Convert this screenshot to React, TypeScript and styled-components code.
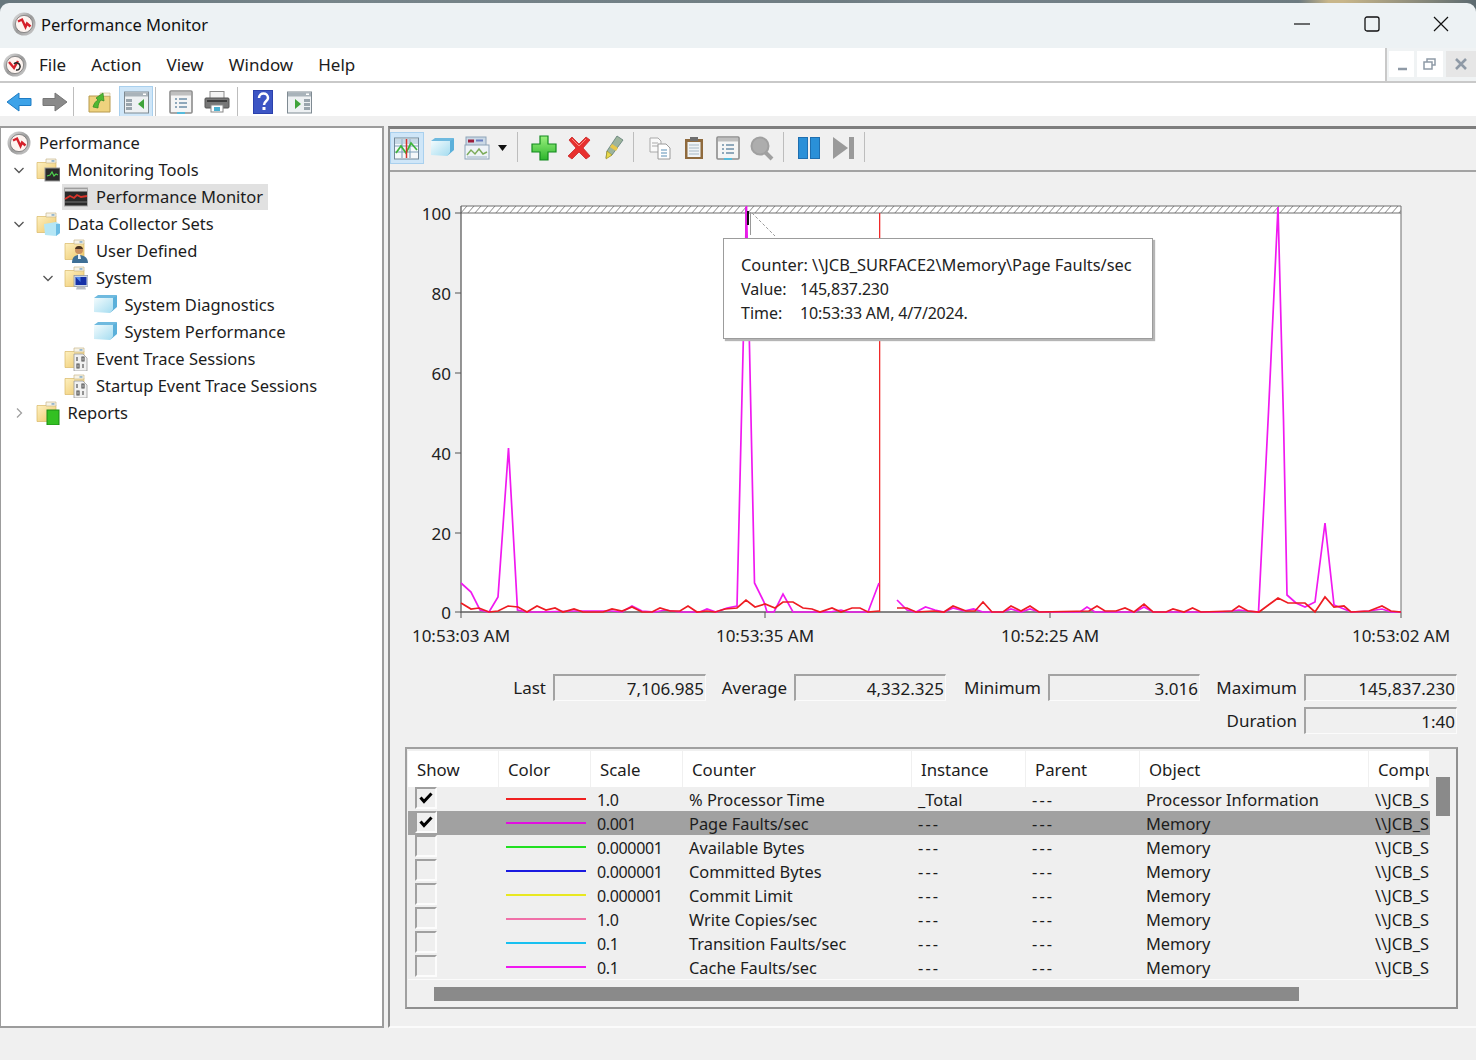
import React from "react";
import styled, { createGlobalStyle } from "styled-components";

const FONT = `"Noto Sans", "Open Sans", sans-serif`;

const Global = createGlobalStyle`
  html, body { margin: 0; padding: 0; background: #f0f0f0; }
  * { box-sizing: border-box; }
  body { font-family: ${FONT}; color: #1c1c1c; }
`;

const Win = styled.div`
  width: 1476px; height: 1060px; overflow: hidden; display: flex; flex-direction: column;
  background: linear-gradient(90deg, #66767c 0, #77858a 22%, #6f7d82 57%, #76838a 62%, #6d7b80 88%, #c8b68a 90%, #c8b68a 91%, #5c6a70 100%);
  font-size: 17px;
`;
const TitleBar = styled.div`
  margin-top: 3px; height: 45px; flex: none; display: flex; align-items: center; padding: 0 0 3px 12px;
  background: #edf2f4; border-radius: 9px 9px 0 0;
`;
const TitleText = styled.div`
  margin-left: 5px; font-size: 16.5px; flex: 1; color: #111;
`;
const WinControl = styled.div`
  width: 69.5px; height: 40px; display: flex; align-items: center; justify-content: center;
`;
const MenuRow = styled.div`
  height: 35px; flex: none; display: flex; background: #edf2f4;
`;
const MenuBar = styled.div`
  width: 1390px; height: 100%; display: flex; align-items: center; padding-left: 3px; background: #fff;
  border-bottom: 2px solid #c9c9c9; border-right: 2px solid #c9c9c9;
`;
const MenuItems = styled.div`
  display: flex; gap: 25px; margin-left: 12px; padding-bottom: 1px;
`;
const MenuItem = styled.span``;
const MdiGroup = styled.div`
  flex: 1; display: flex; gap: 3px; padding: 3px 0 4px 2px; border-bottom: 2px solid #c9c9c9; background: #f0f3f4;
`;
const MdiBtn = styled.div<{ $w: number; $bg: string }>`
  width: ${(p) => p.$w}px; display: flex; align-items: center; justify-content: center; background: ${(p) => p.$bg};
`;
const Toolbar = styled.div`
  height: 33px; flex: none; display: flex; align-items: center; gap: 2px; padding: 5px 0 0 2px; background: #fff;
`;
const ToolBtn = styled.div<{ $w?: number; $active?: boolean }>`
  width: ${(p) => p.$w ?? 34}px; height: 32px; flex: none; display: flex; align-items: center; justify-content: center;
  background: ${(p) => (p.$active ? "#cfe6f8" : "transparent")};
  border: 1px solid ${(p) => (p.$active ? "#a9d0ee" : "transparent")};
`;
const Sep = styled.div<{ $ml?: number; $mr?: number; $h?: number }>`
  width: 1px; height: ${(p) => p.$h ?? 30}px; flex: none; background: #bdbdbd;
  margin-left: ${(p) => p.$ml ?? -1}px; margin-right: ${(p) => p.$mr ?? 6}px;
`;
const Main = styled.div`
  flex: none; height: 945px; display: flex; gap: 4px; padding-top: 10px; background: #f0f0f0;
`;
const TreePane = styled.div`
  width: 384px; height: 902px; flex: none; background: #fff; padding: 1px 0 0 0;
  border: 2px solid #9c9c9c; border-left-width: 1px;
`;
const TreeRow = styled.div<{ $level: number }>`
  height: 27px; display: flex; align-items: center;
  padding-left: ${(p) => (p.$level === 0 ? 6 : (p.$level - 1) * 28.5 + 6)}px;
`;
const ChevSlot = styled.div`
  width: 28.5px; height: 27px; flex: none; display: flex; align-items: center; padding-left: 6px;
`;
const TreeItem = styled.div<{ $sel?: boolean }>`
  height: 26px; display: flex; align-items: center; gap: 8px; margin-left: -2px; padding: 0 5px 0 2px;
  font-size: 16.5px;
  background: ${(p) => (p.$sel ? "#e1e1e1" : "transparent")};
`;
const RightPane = styled.div`
  flex: 1; height: 902px; display: flex; flex-direction: column; background: #f0f0f0;
  border-top: 3px solid #7d7d7d; border-left: 2px solid #8f8f8f; border-bottom: 2px solid #fbfbfb;
`;
const PanelBar = styled.div`
  height: 43px; flex: none; display: flex; align-items: flex-start; gap: 1px; padding-top: 3px;
  border-bottom: 2px solid #a3a3a3;
`;
const ChartArea = styled.div`
  position: relative; height: 501px; flex: none;
`;
const ChartSvg = styled.svg`
  display: block; width: 1086px; height: 501px;
`;
const Tip = styled.div`
  position: absolute; left: 333px; top: 66px; width: 430px; height: 101px; padding: 14px 0 0 17px;
  background: #fff; border: 1px solid #9c9c9c; box-shadow: 2px 2px 1px #b5b5b5;
  font-size: 16px; line-height: 24px; color: #222;
`;
const TipRow = styled.div`
  display: flex; white-space: nowrap; letter-spacing: -.2px;
`;
const TipLabel = styled.span`
  width: 59px; flex: none; letter-spacing: 0;
`;
const TipLong = styled.span`
  font-size: 16.4px; letter-spacing: 0;
`;
const Stats = styled.div`
  display: grid; flex: none; height: 60px; margin-top: 1px;
  grid-template-columns: 163px 153px 88px 152px 102px 152px 104px 153px;
  grid-auto-rows: 27px; row-gap: 6px;
`;
const StatLabel = styled.div<{ $col?: number }>`
  display: flex; align-items: center; justify-content: flex-end; padding-right: 7px;
  ${(p) => (p.$col ? `grid-column: ${p.$col};` : "")}
`;
const StatField = styled.div`
  display: flex; align-items: center; justify-content: flex-end; padding-right: 1px;
  border-top: 2px solid #a3a3a3; border-left: 2px solid #a3a3a3;
  border-right: 1px solid #fbfbfb; border-bottom: 1px solid #fbfbfb;
`;
const Frame = styled.div`
  margin: 13px 18px 0 15px; height: 262px; flex: none; padding: 2px 0 0 1px;
  border: 2px solid #a0a0a0; border-bottom-color: #8f8f8f; border-right-color: #8f8f8f;
  display: grid; grid-template-columns: 1022px 1fr; grid-template-rows: 229px 27px;
`;
const TableClip = styled.div`
  overflow: hidden; width: 1022px;
`;
const Cols = `91px 92px 92px 229px 114px 114px 229px 61px`;
const HeadRow = styled.div`
  display: grid; grid-template-columns: ${Cols}; height: 36px; background: #fff;
`;
const HeadCell = styled.div`
  display: flex; align-items: center; padding-left: 9px; overflow: hidden; white-space: nowrap;
  border-right: 1px solid #f0f0f0; font-size: 16.8px;
`;
const Row = styled.div<{ $sel?: boolean }>`
  display: grid; grid-template-columns: ${Cols}; height: 24px;
  background: ${(p) => (p.$sel ? "#a1a1a1" : "#efefef")};
`;
const Cell = styled.div`
  display: flex; align-items: center; padding-left: 6px; overflow: hidden; white-space: nowrap; padding-top: 1px;
  font-size: 16.4px;
`;
const ScaleCell = styled(Cell)`
  font-size: 16px; letter-spacing: -.35px;
`;
const Dash = styled.span`
  letter-spacing: 2.1px;
`;
const ShowCell = styled.div`
  padding-left: 7px;
`;
const Check = styled.div`
  width: 22px; height: 22px; background: #efefef; display: flex; align-items: center; justify-content: center;
  border-top: 2px solid #a0a0a0; border-left: 2px solid #a0a0a0; border-right: 2px solid #fcfcfc; border-bottom: 2px solid #fcfcfc;
`;
const ColorCell = styled.div`
  display: flex; align-items: center; padding-left: 7px;
`;
const ColorLine = styled.div<{ $c: string }>`
  width: 80px; height: 2px; background: ${(p) => p.$c};
`;
const RowsEnd = styled.div`
  height: 1px; background: #fbfbfb;
`;
const VTrack = styled.div`
  padding: 26px 0 0 6px;
`;
const VThumb = styled.div`
  width: 14px; height: 39px; background: #8a8a8a;
`;
const HTrack = styled.div`
  padding: 7px 0 0 26px;
`;
const HThumb = styled.div`
  width: 865px; height: 14px; background: #8a8a8a;
`;
const StatusBar = styled.div`
  flex: 1; display: flex; justify-content: flex-end; background: #f0f0f0; padding-top: 2px;
`;
const StatusCell = styled.div<{ $w: number }>`
  width: ${(p) => p.$w}px; border-left: 1px solid #dcdcdc;
`;

/* ---------- icons ---------- */
const Logo = ({ menu }: { menu?: boolean }) => (
  <svg width="24" height="24" viewBox="0 0 24 24" style={{ flex: "none" }}>
    <defs>
      <linearGradient id="ring" x1="0" y1="0" x2="1" y2="1">
        <stop offset="0" stopColor="#e6e6e6" /><stop offset=".5" stopColor="#9a9a9a" /><stop offset="1" stopColor="#cfcfcf" />
      </linearGradient>
    </defs>
    <circle cx="12" cy="12" r="11.5" fill="url(#ring)" />
    <circle cx="12" cy="12" r="8.6" fill="#fdf4f0" stroke="#6d6d6d" strokeWidth=".7" />
    <path d={menu ? "M6 9l5 6 4-7" : "M6 9.500l4-2 3.500 7.500 1.500-3.500 3.500 3"} fill="none" stroke="#d5202a" strokeWidth="2.400" />
    {menu && <path d="M11 11a3.500 3.500 0 0 1 6 1.500 3.500 3.500 0 0 1-4 4.500" fill="none" stroke="#222" strokeWidth="1.500" />}
  </svg>
);
const Folder = ({ children }: { children?: React.ReactNode }) => (
  <svg width="24" height="24" viewBox="0 0 24 24" style={{ flex: "none" }}>
    <defs>
      <linearGradient id="fold" x1="0" y1="0" x2="1" y2="1">
        <stop offset="0" stopColor="#fdf0c0" /><stop offset="1" stopColor="#eec769" />
      </linearGradient>
    </defs>
    <path d="M1 4.500h19v16H1z" fill="url(#fold)" stroke="#d9b865" strokeWidth=".7" />
    <path d="M10 1h10v4H10z" fill="#f7f3e6" stroke="#c9b78a" strokeWidth=".7" />
    <path d="M15.500 2.200h3v1.500h-3z" fill="#7fa8c8" />
    {children}
  </svg>
);
const BadgeMonitor = () => (
  <g>
    <rect x="9" y="10" width="15" height="13" fill="#2b2b2b" stroke="#999" />
    <path d="M11 18l3-1 2-3 2 4 2-2 2 1" fill="none" stroke="#4fd34f" strokeWidth="1.200" />
  </g>
);
const BadgeCube = () => (
  <g>
    <path d="M8 12l12-2 4 2v9l-4 3-11-1z" fill="#b5e6f5" />
    <path d="M20 12v12l4-3v-9z" fill="#6dbde4" />
  </g>
);
const BadgeUser = () => (
  <g>
    <circle cx="15" cy="11" r="4" fill="#c98f5f" />
    <path d="M15 7a4 4 0 0 1 4 3h-8a4 4 0 0 1 4-3z" fill="#4a3423" />
    <path d="M8 24c0-6 3-8 7-8s9 2 9 8z" fill="#3e6f96" />
    <path d="M14 15h2l1 5h-3z" fill="#e9f2f8" />
  </g>
);
const BadgeComputer = () => (
  <g>
    <rect x="10" y="9.500" width="14" height="11" fill="#cfd8e4" stroke="#8a94a4" strokeWidth=".7" />
    <rect x="11.500" y="11" width="11" height="8" fill="#1631a8" />
    <path d="M11.500 11h5v5z" fill="#4f86ea" />
    <path d="M13 20.500h8l1 3h-10z" fill="#b9bdc4" />
  </g>
);
const BadgeBinary = () => (
  <g>
    <path d="M10 7h9l4 4v13H10z" fill="#f1f1f1" stroke="#9a9a9a" strokeWidth=".8" />
    <path d="M13 10v4M18 10h2v4h-2zM13 17h2v4h-2zM19 17v4" fill="none" stroke="#555" strokeWidth="1.200" />
  </g>
);
const BadgeGreen = () => <rect x="11" y="9" width="12" height="15" fill="#33c022" stroke="#1a8a14" />;
const Cube = ({ s = 24 }: { s?: number }) => (
  <svg width={s} height={s} viewBox="0 0 24 24" style={{ flex: "none" }}>
    <defs>
      <linearGradient id="cube" x1="0" y1="0" x2="1" y2="1">
        <stop offset="0" stopColor="#f2fbfd" /><stop offset="1" stopColor="#a4dcf0" />
      </linearGradient>
    </defs>
    <path d="M1 5l4-3h19l-3 3z" fill="#6fbadf" />
    <path d="M1 5h19v11l-3 4-16-1z" fill="url(#cube)" />
    <path d="M20 5l4-3v12l-7 6 3-4z" fill="#5bb0da" />
  </svg>
);
const Chev = ({ open }: { open?: boolean }) => (
  <svg width="12" height="12" viewBox="0 0 12 12">
    <path d={open ? "M1.500 4l4.500 4.500L10.500 4" : "M4 1.500L8.500 6 4 10.500"} fill="none" stroke={open ? "#555" : "#a0a0a0"} strokeWidth="1.300" />
  </svg>
);
const PerfMonIcon = () => (
  <svg width="24" height="24" viewBox="0 0 24 24" style={{ flex: "none" }}>
    <rect x=".5" y="3" width="23" height="18" fill="#2a2a2a" stroke="#a9a9a9" />
    <rect x="1" y="3.500" width="22" height="3" fill="#d0d0d0" />
    <path d="M1 14l5-3 4 2 3-3 4 2 6-1" fill="none" stroke="#d9342b" strokeWidth="1.800" />
    <path d="M1 17h22" stroke="#888" strokeWidth=".8" />
  </svg>
);
const Arrow = ({ dir, fill, stroke }: { dir: 1 | -1; fill: string; stroke: string }) => (
  <svg width="26" height="24" viewBox="0 0 26 24" style={{ transform: dir < 0 ? "scaleX(-1)" : undefined }}>
    <path d="M1 8.500h12V3l12 9-12 9v-5.500H1z" fill={fill} stroke={stroke} strokeWidth="1" strokeLinejoin="round" />
  </svg>
);
const UpFolder = () => (
  <svg width="24" height="24" viewBox="0 0 24 24">
    <path d="M1 6h21v16H1z" fill="#efd27e" stroke="#b79a4e" />
    <path d="M12 3h10v3H12z" fill="#fbf4dc" stroke="#c9b78a" strokeWidth=".6" />
    <path d="M5 17c1-4 3-6 5-7L8 8l7-5 1 8-3-1c-2 2-3 5-3 8z" fill="#4fb832" stroke="#2f8a22" strokeWidth=".7" />
  </svg>
);
const Pane = ({ arrow, left }: { arrow: string; left: boolean }) => (
  <svg width="25" height="24" viewBox="0 0 25 24">
    <rect x=".5" y="2" width="24" height="21" fill="#eef1f3" stroke="#7f8a92" />
    <rect x="1" y="2.500" width="23" height="4" fill="#a9b3ba" />
    <path d="M19 3.500h3v1.500h-3z" fill="#fff" />
    <g fill="#9aa5ad">
      <rect x={left ? 2 : 17} y="9" width="6" height="3" />
      <rect x={left ? 2 : 17} y="13" width="6" height="3" />
      <rect x={left ? 2 : 17} y="17" width="6" height="3" />
    </g>
    <path d={left ? "M20 9v10l-6-5z" : "M8 9v10l6-5z"} fill={arrow} />
  </svg>
);
const PropsDoc = () => (
  <svg width="24" height="25" viewBox="0 0 24 25">
    <rect x="1" y="1" width="22" height="22" rx="1" fill="#f5f5f5" stroke="#8d8d8d" strokeWidth="1.600" />
    <rect x="2" y="2" width="20" height="3.500" fill="#bfbfbf" />
    <path d="M6 9h2M10 9h8M6 13h2M10 13h8M6 17h2M10 17h8" stroke="#6e8fa8" strokeWidth="1.300" />
    <rect x="8" y="22" width="8" height="2" fill="#55bbdc" />
  </svg>
);
const Printer = () => (
  <svg width="26" height="24" viewBox="0 0 26 24">
    <rect x="6" y="1.500" width="14" height="8" fill="#f4f4f4" stroke="#8d8d8d" />
    <rect x="1" y="8" width="24" height="10" rx="1" fill="#777" stroke="#555" />
    <rect x="3" y="10" width="20" height="2" fill="#3e3e3e" />
    <rect x="7" y="15" width="12" height="7" fill="#fff" stroke="#888" />
    <rect x="10" y="17" width="6" height="4" fill="#4cb0d0" />
  </svg>
);
const Help = () => (
  <svg width="20" height="24" viewBox="0 0 20 24">
    <rect width="20" height="24" fill="#2b41ad" />
    <rect x="1" y="1" width="18" height="22" fill="#3c55c4" />
    <path d="M6 8c0-6 9-6 9 0 0 3-4 3-4 7" fill="none" stroke="#fff" strokeWidth="2.500" />
    <rect x="9.500" y="17" width="3" height="3" fill="#fff" />
  </svg>
);
const MonView = () => (
  <svg width="26" height="24" viewBox="0 0 26 24">
    <rect x=".5" y="2" width="24" height="21" fill="#f5f8fa" stroke="#73899a" />
    <path d="M1 10h23M1 16h23M8 3v19M16 3v19" stroke="#7ea0bc" strokeWidth="1.100" />
    <rect x="1" y="3" width="23" height="5" fill="#a9c4d8" opacity=".6" />
    <path d="M2 17l5-7 5 7 5-10 6 7" fill="none" stroke="#3db43a" strokeWidth="1.700" />
    <path d="M12.500 3v19" stroke="#d5312a" strokeWidth="1.500" />
  </svg>
);
const ViewType = () => (
  <svg width="26" height="24" viewBox="0 0 26 24">
    <rect x="2" y="1" width="20" height="10" fill="#cbd9e6" stroke="#8ea3b8" />
    <rect x="4" y="3.500" width="6" height="3" fill="#9c1f3a" />
    <rect x="12" y="3.500" width="7" height="2" fill="#6a80c0" />
    <rect x="1" y="9" width="24" height="14" fill="#eef3f7" stroke="#8ea3b8" />
    <path d="M3 19l4-5 4 4 4-5 4 5 4-2" fill="none" stroke="#7cab5a" strokeWidth="1.500" />
    <path d="M3 21h20" stroke="#9bb0c4" />
  </svg>
);
const Caret = () => (
  <svg width="9" height="6" viewBox="0 0 9 6"><path d="M0 0h9L4.500 6z" fill="#111" /></svg>
);
const Plus = () => (
  <svg width="26" height="26" viewBox="0 0 26 26">
    <defs>
      <linearGradient id="plus" x1="0" y1="0" x2="0" y2="1">
        <stop offset="0" stopColor="#9bf07e" /><stop offset="1" stopColor="#2cb52c" />
      </linearGradient>
    </defs>
    <path d="M9 1h8v8h8v8h-8v8H9v-8H1V9h8z" fill="url(#plus)" stroke="#138a1e" strokeWidth="1.200" />
  </svg>
);
const Cross = () => (
  <svg width="26" height="26" viewBox="0 0 26 26">
    <path d="M3 5l3-3 7 7 7-7 4 3-7 8 7 8-4 3-7-7-7 7-4-3 8-8z" fill="#e8302e" stroke="#c6282a" strokeWidth=".8" strokeLinejoin="round" />
    <path d="M6 4l7 7 7-7" fill="none" stroke="#f78a80" strokeWidth="1" />
  </svg>
);
const Pen = () => (
  <svg width="20" height="26" viewBox="0 0 20 26">
    <path d="M13 1l6 4-11 15-6 3 1-7z" fill="#9db49c" stroke="#5e7c76" strokeWidth=".8" />
    <path d="M3 16l5 4-6 4z" fill="#e9d94b" stroke="#a08d1d" strokeWidth=".6" />
    <path d="M6 12l6 4 2-3-6-4z" fill="#e9c84b" />
  </svg>
);
const Copy = () => (
  <svg width="22" height="24" viewBox="0 0 22 24">
    <path d="M1 2h8l3 3v11H1z" fill="#fafafa" stroke="#a9a9a9" />
    <path d="M3 7h6M3 10h6" stroke="#a9a9a9" />
    <path d="M9 8h8l4 4v11H9z" fill="#fff" stroke="#9a9a9a" />
    <path d="M12 14h6M12 17h6M12 20h6" stroke="#5a8fb5" />
  </svg>
);
const Paste = () => (
  <svg width="20" height="24" viewBox="0 0 20 24">
    <rect x="1" y="3" width="18" height="20" fill="#8f6a3d" />
    <rect x="3.500" y="6" width="13" height="15" fill="#f0f3f5" />
    <path d="M5 9h10M5 12h10M5 15h10M5 18h10" stroke="#a7b8c4" />
    <rect x="6" y="1" width="8" height="4" fill="#6e6e6e" />
  </svg>
);
const Loupe = () => (
  <svg width="25" height="25" viewBox="0 0 25 25">
    <circle cx="10" cy="10" r="8.500" fill="#adadad" stroke="#a0a0a0" strokeWidth="2" />
    <path d="M15 16l7 7" stroke="#a0a0a0" strokeWidth="4" />
  </svg>
);
const Pause = () => (
  <svg width="22" height="22" viewBox="0 0 22 22">
    <rect x=".5" y=".5" width="9" height="21" fill="#2a90d8" stroke="#1f6fb0" />
    <rect x="12.500" y=".5" width="9" height="21" fill="#2a90d8" stroke="#1f6fb0" />
  </svg>
);
const NextIcon = () => (
  <svg width="22" height="22" viewBox="0 0 22 22">
    <path d="M0 0l15 11L0 22z" fill="#9a9a9a" />
    <rect x="16" width="5" height="22" fill="#9a9a9a" />
  </svg>
);

const magenta1: [number, number][] = [
  [461, 583], [471, 592], [480, 610], [489, 612], [498, 597], [508.500, 448], [517.500, 610], [527, 612], [537, 612],
  [575, 611], [600, 611], [612, 611], [622, 612], [632, 606], [642, 611], [655, 612], [665, 610], [680, 612],
  [700, 612], [707, 609], [716, 612], [727, 608], [737, 606], [746.500, 206], [754.500, 583], [764, 602], [767, 612], [774, 612],
  [783, 594], [793, 612], [830, 612], [841, 610], [848, 612], [868, 612], [879, 583],
];
const magenta2: [number, number][] = [
  [897, 600], [907, 610], [916, 612], [925.500, 607], [935, 610], [944, 612], [953, 608], [964, 611], [973.500, 609], [983, 612],
  [1003, 612], [1011, 609], [1021, 612], [1030, 609], [1039, 612], [1080, 612], [1087, 607], [1095, 612], [1135, 612],
  [1144, 607], [1153, 612], [1195, 612], [1220, 612], [1232, 611], [1239, 610], [1248, 611], [1258.500, 612], [1268.500, 412], [1278, 207], [1283.500, 420],
  [1287, 595], [1296, 603], [1305, 607], [1315, 602], [1325, 523], [1334, 605], [1344, 609], [1351, 612], [1369, 611], [1382, 609], [1391, 612], [1401, 612],
];
const red1: [number, number][] = [
  [461, 603], [471, 609], [479, 608], [489, 612], [498, 611], [508, 606], [518, 607], [527, 612], [537, 606], [546, 610], [555, 608], [563, 612],
  [574, 609], [583, 612], [603, 612], [612, 609], [622, 611], [632, 607], [642, 612], [652, 612], [660, 608], [670, 611], [680, 611], [688, 606], [697, 612],
  [707, 611], [715, 612], [725, 609], [737, 608], [746, 600], [755, 607], [765, 604], [775, 608], [783, 602], [793, 602], [803, 608], [812, 609], [820, 612],
  [832, 608], [841, 612], [852, 608], [860, 608], [868, 612], [879, 611],
];
const red2: [number, number][] = [
  [897, 608], [907, 608], [916, 612], [934, 611], [944, 612], [953, 606], [966, 611], [975, 611], [983, 602], [992, 612], [1003, 612], [1011, 606], [1021, 611],
  [1030, 606], [1039, 612], [1089, 611], [1097, 606], [1105, 611], [1116, 611], [1125, 608], [1134, 612], [1144, 604], [1153, 612], [1166, 612], [1173, 609],
  [1184, 612], [1192.500, 608], [1201, 612], [1232, 611], [1239, 606], [1248, 611], [1259, 612], [1278, 598], [1288, 603], [1305, 603], [1315, 612], [1325, 597],
  [1334, 607], [1344, 606], [1351, 612], [1369, 611], [1382, 606], [1391, 611], [1401, 612],
];
const pts = (a: [number, number][]) => a.map((p) => p.join(",")).join(" ");

const yTicks: [string, number][] = [["100", 213], ["80", 293], ["60", 373], ["40", 453], ["20", 533], ["0", 612]];
const xTicks: [string, number][] = [["10:53:03 AM", 461], ["10:53:35 AM", 765], ["10:52:25 AM", 1050], ["10:53:02 AM", 1401]];

const Chart = () => (
  <ChartSvg viewBox="390 172 1086 501">
    <defs>
      <pattern id="hatch" width="7" height="8" patternUnits="userSpaceOnUse" patternTransform="translate(461 206)">
        <rect width="7" height="8" fill="#fff" />
        <path d="M-1 8L6 0M6 8L13 0" stroke="#8a8a8a" strokeWidth="1" />
      </pattern>
    </defs>
    <rect x="461" y="213" width="940" height="399" fill="#fff" />
    <rect x="461" y="206" width="940" height="7" fill="url(#hatch)" />
    <path d="M461 206H1401V612M461 213H1401" fill="none" stroke="#6f6f6f" strokeWidth="1" />
    <path d="M461 206V612H1401" fill="none" stroke="#5f5f5f" strokeWidth="1.300" />
    {yTicks.map(([t, y]) => (
      <g key={t}>
        <path d={`M455 ${y}H461`} stroke="#555" />
        <text x="451" y={y + 7} textAnchor="end" fontFamily={FONT} fontSize="17" fill="#222">{t}</text>
      </g>
    ))}
    {xTicks.map(([t, x]) => (
      <g key={t}>
        <path d={`M${x} 612V618`} stroke="#555" />
        <text x={x} y="642" textAnchor="middle" fontFamily={FONT} fontSize="17" fill="#222">{t}</text>
      </g>
    ))}
    <rect x="879" y="213" width="1.300" height="399" fill="#f02a2a" />
    <polyline points={pts(magenta1)} fill="none" stroke="#f019f0" strokeWidth="1.700" />
    <polyline points={pts(magenta2)} fill="none" stroke="#f019f0" strokeWidth="1.700" />
    <polyline points={pts(red1)} fill="none" stroke="#ee1c22" strokeWidth="1.700" />
    <polyline points={pts(red2)} fill="none" stroke="#ee1c22" strokeWidth="1.700" />
    <path d="M745.800 207V238" stroke="#e020e0" strokeWidth="1.500" />
    <path d="M748 211V225" stroke="#111" strokeWidth="2" />
    <path d="M750.500 212V235" stroke="#999" strokeWidth="1" />
    <path d="M752 213L775 236" stroke="#999" strokeWidth="1" strokeDasharray="3 2" />
  </ChartSvg>
);

const treeData = [
  { l: 0, t: "Performance", icon: <Logo /> },
  { l: 1, t: "Monitoring Tools", open: true, icon: <Folder><BadgeMonitor /></Folder> },
  { l: 2, t: "Performance Monitor", sel: true, icon: <PerfMonIcon /> },
  { l: 1, t: "Data Collector Sets", open: true, icon: <Folder><BadgeCube /></Folder> },
  { l: 2, t: "User Defined", icon: <Folder><BadgeUser /></Folder> },
  { l: 2, t: "System", open: true, icon: <Folder><BadgeComputer /></Folder> },
  { l: 3, t: "System Diagnostics", icon: <Cube /> },
  { l: 3, t: "System Performance", icon: <Cube /> },
  { l: 2, t: "Event Trace Sessions", icon: <Folder><BadgeBinary /></Folder> },
  { l: 2, t: "Startup Event Trace Sessions", icon: <Folder><BadgeBinary /></Folder> },
  { l: 1, t: "Reports", open: false, icon: <Folder><BadgeGreen /></Folder> },
];

const heads = ["Show", "Color", "Scale", "Counter", "Instance", "Parent", "Object", "Computer"];
const rows = [
  { on: true, c: "#f02020", s: "1.0", n: "% Processor Time", i: "_Total", o: "Processor Information" },
  { on: true, sel: true, c: "#e010e0", s: "0.001", n: "Page Faults/sec", i: "---", o: "Memory" },
  { c: "#22e022", s: "0.000001", n: "Available Bytes", i: "---", o: "Memory" },
  { c: "#1a1ae0", s: "0.000001", n: "Committed Bytes", i: "---", o: "Memory" },
  { c: "#e8e820", s: "0.000001", n: "Commit Limit", i: "---", o: "Memory" },
  { c: "#f070a8", s: "1.0", n: "Write Copies/sec", i: "---", o: "Memory" },
  { c: "#18c0f0", s: "0.1", n: "Transition Faults/sec", i: "---", o: "Memory" },
  { c: "#f018f0", s: "0.1", n: "Cache Faults/sec", i: "---", o: "Memory" },
];

export default function App() {
  return (
    <Win>
      <Global />
      <TitleBar>
        <Logo />
        <TitleText>Performance Monitor</TitleText>
        <WinControl>
          <svg width="16" height="2" viewBox="0 0 16 2"><path d="M0 1h16" stroke="#111" strokeWidth="1.200" /></svg>
        </WinControl>
        <WinControl>
          <svg width="16" height="16" viewBox="0 0 16 16"><rect x="1" y="1" width="14" height="14" rx="2" fill="none" stroke="#111" strokeWidth="1.300" /></svg>
        </WinControl>
        <WinControl>
          <svg width="16" height="16" viewBox="0 0 16 16"><path d="M1 1l14 14M15 1L1 15" stroke="#111" strokeWidth="1.200" /></svg>
        </WinControl>
      </TitleBar>
      <MenuRow>
        <MenuBar>
          <Logo menu />
          <MenuItems>
            {["File", "Action", "View", "Window", "Help"].map((m) => <MenuItem key={m}>{m}</MenuItem>)}
          </MenuItems>
        </MenuBar>
        <MdiGroup>
          <MdiBtn $w={25} $bg="#fff">
            <svg width="12" height="14" viewBox="0 0 12 14"><path d="M2 12h9" stroke="#8f9aa6" strokeWidth="2.500" /></svg>
          </MdiBtn>
          <MdiBtn $w={26} $bg="#fff">
            <svg width="14" height="14" viewBox="0 0 14 14" fill="none" stroke="#8f9aa6" strokeWidth="1.500">
              <rect x="1" y="5" width="8" height="7" /><path d="M4 5V2h8v6h-3" />
            </svg>
          </MdiBtn>
          <MdiBtn $w={30} $bg="#e6e6e6">
            <svg width="12" height="12" viewBox="0 0 12 12"><path d="M1 1l10 10M11 1L1 11" stroke="#8f9aa6" strokeWidth="2.600" /></svg>
          </MdiBtn>
        </MdiGroup>
      </MenuRow>
      <Toolbar>
        <ToolBtn><Arrow dir={-1} fill="#3ea3e8" stroke="#1f7cc4" /></ToolBtn>
        <ToolBtn><Arrow dir={1} fill="#8a8a8a" stroke="#777" /></ToolBtn>
        <Sep $ml={-1} $mr={7} />
        <ToolBtn><UpFolder /></ToolBtn>
        <ToolBtn $active><Pane arrow="#3fa33a" left /></ToolBtn>
        <Sep $ml={0} />
        <ToolBtn><PropsDoc /></ToolBtn>
        <ToolBtn><Printer /></ToolBtn>
        <Sep $ml={1} />
        <ToolBtn><Help /></ToolBtn>
        <ToolBtn><Pane arrow="#3fa33a" left={false} /></ToolBtn>
      </Toolbar>
      <Main>
        <TreePane>
          {treeData.map((n) => (
            <TreeRow key={n.t} $level={n.l}>
              {n.l > 0 && <ChevSlot>{n.open !== undefined && <Chev open={n.open} />}</ChevSlot>}
              <TreeItem $sel={n.sel}>
                {n.icon}
                <span>{n.t}</span>
              </TreeItem>
            </TreeRow>
          ))}
        </TreePane>
        <RightPane>
          <PanelBar>
            <ToolBtn $active><MonView /></ToolBtn>
            <ToolBtn><Cube s={24} /></ToolBtn>
            <ToolBtn><ViewType /></ToolBtn>
            <ToolBtn $w={14}><Caret /></ToolBtn>
            <Sep $ml={7} $mr={8} />
            <ToolBtn><Plus /></ToolBtn>
            <ToolBtn><Cross /></ToolBtn>
            <ToolBtn><Pen /></ToolBtn>
            <Sep $ml={1} $mr={8} />
            <ToolBtn $w={33}><Copy /></ToolBtn>
            <ToolBtn $w={33}><Paste /></ToolBtn>
            <ToolBtn $w={33}><PropsDoc /></ToolBtn>
            <ToolBtn><Loupe /></ToolBtn>
            <Sep $ml={3} $mr={7} />
            <ToolBtn><Pause /></ToolBtn>
            <ToolBtn><NextIcon /></ToolBtn>
            <Sep $ml={2} $mr={0} />
          </PanelBar>
          <ChartArea>
            <Chart />
            <Tip>
              <TipRow><TipLong>{"Counter: \\\\JCB_SURFACE2\\Memory\\Page Faults/sec"}</TipLong></TipRow>
              <TipRow><TipLabel>Value:</TipLabel>145,837.230</TipRow>
              <TipRow><TipLabel>Time:</TipLabel>10:53:33 AM, 4/7/2024.</TipRow>
            </Tip>
          </ChartArea>
          <Stats>
            <StatLabel>Last</StatLabel><StatField>7,106.985</StatField>
            <StatLabel>Average</StatLabel><StatField>4,332.325</StatField>
            <StatLabel>Minimum</StatLabel><StatField>3.016</StatField>
            <StatLabel>Maximum</StatLabel><StatField>145,837.230</StatField>
            <StatLabel $col={7}>Duration</StatLabel><StatField>1:40</StatField>
          </Stats>
          <Frame>
            <TableClip>
              <HeadRow>
                {heads.map((h) => <HeadCell key={h}>{h}</HeadCell>)}
              </HeadRow>
              {rows.map((r) => (
                <Row key={r.n} $sel={r.sel}>
                  <ShowCell>
                    <Check>
                      {r.on && (
                        <svg width="14" height="12" viewBox="0 0 14 12"><path d="M1.500 5.500L5 9.500 12.500 1.500" fill="none" stroke="#000" strokeWidth="3" /></svg>
                      )}
                    </Check>
                  </ShowCell>
                  <ColorCell><ColorLine $c={r.c} /></ColorCell>
                  <ScaleCell>{r.s}</ScaleCell>
                  <Cell>{r.n}</Cell>
                  <Cell>{r.i === "---" ? <Dash>---</Dash> : r.i}</Cell>
                  <Cell><Dash>---</Dash></Cell>
                  <Cell>{r.o}</Cell>
                  <Cell>{"\\\\JCB_SURFACE2"}</Cell>
                </Row>
              ))}
              <RowsEnd />
            </TableClip>
            <VTrack><VThumb /></VTrack>
            <HTrack><HThumb /></HTrack>
          </Frame>
        </RightPane>
      </Main>
      <StatusBar>
        <StatusCell $w={131} />
        <StatusCell $w={1} />
      </StatusBar>
    </Win>
  );
}
